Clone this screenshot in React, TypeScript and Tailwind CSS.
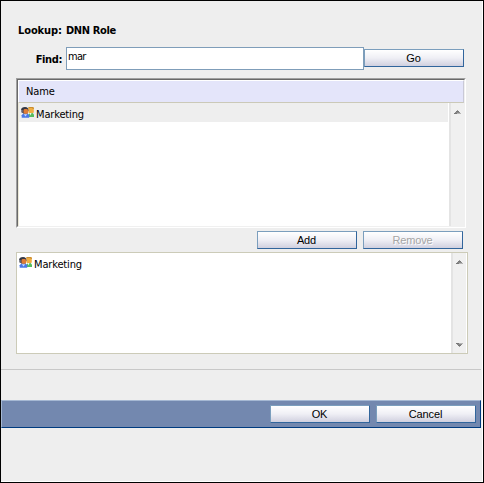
import type { ReactNode } from 'react';

const uiFont = "font-['Tahoma','DejaVu_Sans_Condensed','DejaVu_Sans',sans-serif] tracking-[-0.15px]";

function Button({ children, disabled = false }: { children: ReactNode; disabled?: boolean }) {
  return (
    <button
      disabled={disabled}
      className={
        "h-[18px] w-[100px] shrink-0 border border-t-[#7b9ebd] border-l-[#7b9ebd] border-r-[#31659c] border-b-[#31659c] bg-linear-to-b from-white via-[#efeff5] to-[#d0d0df] pr-px text-center font-['Liberation_Sans',sans-serif] text-[11px] leading-[16px] " +
        (disabled ? 'text-[#a5a5a5] [text-shadow:1px_1px_0_white]' : 'text-black')
      }
    >
      {children}
    </button>
  );
}

function Arrow({ down = false }: { down?: boolean }) {
  return (
    <svg width="7" height="4" viewBox="0 0 7 4" shapeRendering="crispEdges" className={down ? '-scale-y-100' : ''}>
      <path d="M3 0h1v1H3z" fill="#999" />
      <path d="M2 1h3v1H2z" fill="#777" />
      <path d="M1 2h5v1H1z" fill="#888" />
      <path d="M0 3h3v1H0z" fill="#777" />
      <path d="M3 3h4v1H3z" fill="#b5b5b5" />
    </svg>
  );
}

function RoleIcon() {
  return (
    <svg width="13" height="11" viewBox="0 0 13 11" className="shrink-0">
      <path d="M7.500 10V7.500L9 6h2.500L13 7.500V10z" fill="#55bd5e" />
      <path d="M8.500 6h2L9.500 8.500z" fill="#f4f8e8" />
      <rect x="7.300" y="0" width="5.500" height="6" rx="1" fill="#f0ae42" />
      <path d="M7.300 1.500V.5L8.500 0h3.500l.8 1v1h-1.300V1H9z" fill="#c88d32" />
      <path d="M0.700 10.800V8.300L2.300 6.500h4.400L8.200 8.300v2.500z" fill="#4a78e6" />
      <path d="M2.800 7.300h3.400L4.500 9.500z" fill="#c9dbff" />
      <path d="M0 3.300C0 1 1.800 0 4 0c2.500 0 3.500 1.400 3.400 3.200L6.500 6.500h-4L.5 5.300z" fill="#343744" />
      <rect x="2.500" y="2" width="4.500" height="4.800" rx="1.400" fill="#df7c36" />
      <path d="M0 3h1.500v2.500H.5z" fill="#8b8e9b" />
    </svg>
  );
}

function ScrollBar({ bottom = false }: { bottom?: boolean }) {
  return (
    <div className="flex w-[15px] shrink-0 flex-col items-center justify-between border-l-2 border-l-[#e4e4e4] bg-[#f0f0f0] pt-[7px] pb-[6px]">
      <Arrow />
      {bottom && <Arrow down />}
    </div>
  );
}

export default function App() {
  return (
    <div className={'h-[483px] w-[484px] overflow-hidden border border-black bg-[#eee] text-[11px] leading-[14px] text-black ' + uiFont}>
      <div className="flex h-[481px] flex-col border-r border-b border-white">
        <div className="h-[46px] pt-[23px] pl-[17px] font-bold tracking-[-0.35px] whitespace-nowrap"><span className="mr-px tracking-[-0.1px]">Lookup:</span> DNN Role</div>
        <div className="flex h-[31px]">
          <label htmlFor="find" className="w-[61px] shrink-0 pt-[6px] text-right font-bold tracking-[-0.4px]">Find:</label>
          <div className="ml-1 h-[23px] w-[298px] shrink-0 border border-[#7f9db9] bg-white">
            <input id="find" defaultValue="mar" className="mt-[2px] block h-[14px] w-full bg-transparent pl-px tracking-[-0.7px] outline-none" />
          </div>
          <div className="flex pt-[2px]"><Button>Go</Button></div>
        </div>
        <div className="ml-[15px] h-[150px] w-[450px] shrink-0 border border-t-[#a0a0a0] border-l-[#a0a0a0] border-r-white border-b-white">
          <div className="flex h-[148px] flex-col border border-t-[#696969] border-l-[#696969] border-r-[#f0f0f0] border-b-[#f0f0f0] bg-white">
            <div className="h-[23px] shrink-0 border border-t-white border-l-white border-r-[#c9c9d6] border-b-[#cbc9b8] bg-[#e4e5fa] pt-[4px] pl-[7px]">Name</div>
            <div className="flex min-h-0 flex-1 border-l border-l-[#ece9d8]">
              <div className="flex-1">
                <div className="mr-px flex h-[19px] gap-[2px] bg-[#eee] pt-[4px] pl-[2px]"><RoleIcon /><span className="pt-px">Marketing</span></div>
              </div>
              <ScrollBar />
            </div>
          </div>
        </div>
        <div className="mt-[3px] flex h-[21px] shrink-0 gap-[6px] pl-[256px]">
          <Button>Add</Button>
          <Button disabled>Remove</Button>
        </div>
        <div className="ml-[15px] flex h-[102px] w-[452px] shrink-0 border border-[#cccbb8] bg-white pr-px">
          <div className="flex flex-1 gap-[2px] pt-[4px] pl-[2px]"><RoleIcon /><span className="pt-px">Marketing</span></div>
          <ScrollBar bottom />
        </div>
        <div className="mt-[15px] h-px w-[480px] shrink-0 bg-[#c8c8c8]" />
        <div className="mt-[30px] flex h-[28px] w-[480px] shrink-0 justify-end gap-[6px] border border-t-[#a5b8d3] border-l-[#a5b8d3] border-r-[#003b80] border-b-[#003b80] bg-[#7388af] pt-[4px] pr-[4px]">
          <Button>OK</Button>
          <Button>Cancel</Button>
        </div>
      </div>
    </div>
  );
}
